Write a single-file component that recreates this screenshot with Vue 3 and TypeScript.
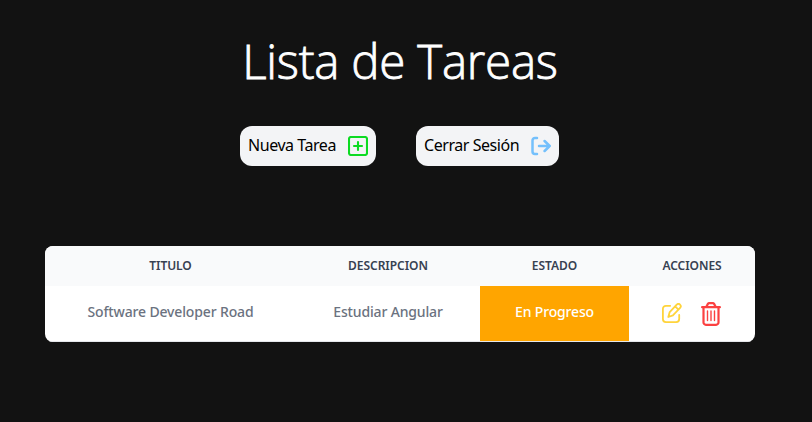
<script setup lang="ts">
interface Task {
  id: number
  title: string
  description: string
  status: string
}

const columns: string[] = ['Titulo', 'Descripcion', 'Estado', 'Acciones']
const tasks: Task[] = [
  { id: 1, title: 'Software Developer Road', description: 'Estudiar Angular', status: 'En Progreso' },
]
</script>

<template>
  <main class="page">
    <h1 class="title"><span>Lista de Tareas</span></h1>

    <div class="toolbar">
      <button class="btn btn-new" type="button">
        <span class="label">Nueva Tarea</span>
        <svg class="btn-icon add" viewBox="0 0 20 20" fill="none" stroke="currentColor" stroke-width="2.1" stroke-linecap="round">
          <rect x="1" y="1" width="18" height="18" rx="2" />
          <path d="M10 6v8M6 10h8" />
        </svg>
      </button>
      <button class="btn btn-out" type="button">
        <span class="label">Cerrar Sesión</span>
        <svg class="btn-icon logout" viewBox="0 0 20 20" fill="none" stroke="currentColor" stroke-width="2.5" stroke-linecap="round" stroke-linejoin="round">
          <path d="M6 2H4A2.500 2.500 0 0 0 1.500 4.500v11A2.500 2.500 0 0 0 4 18H6" />
          <path d="M8 10h10.700M13.600 5l5.100 5-5.100 5" />
        </svg>
      </button>
    </div>

    <div class="card">
      <table class="table">
        <colgroup>
          <col class="c1" />
          <col class="c2" />
          <col class="c3" />
          <col class="c4" />
        </colgroup>
        <thead>
          <tr>
            <th v-for="column in columns" :key="column">{{ column }}</th>
          </tr>
        </thead>
        <tbody>
          <tr v-for="task in tasks" :key="task.id">
            <td><span class="cell">{{ task.title }}</span></td>
            <td><span class="cell">{{ task.description }}</span></td>
            <td class="status"><span class="cell">{{ task.status }}</span></td>
            <td>
              <div class="actions">
                <svg class="edit" viewBox="0 0 20 20" fill="none" stroke="currentColor" stroke-width="1.8" stroke-linecap="round" stroke-linejoin="round">
                  <path d="M8.200 2.800H3.900A3 3 0 0 0 .9 5.800v10.300a3 3 0 0 0 3 3h10.300a3 3 0 0 0 3-3v-4.300" />
                  <path d="M14.700 1.700a2.250 2.250 0 0 1 3.400 3.200L10.900 12.300 6.300 14l1.400-4.900zM13.200 3.400l3.200 3.200" />
                </svg>
                <svg class="trash" viewBox="0 0 20 24" fill="none" stroke="currentColor" stroke-width="2.2" stroke-linecap="round" stroke-linejoin="round">
                  <path d="M1.100 5.200h17.800M5.200 5l1.700-3.100Q7.300 1.100 8.200 1.100h3.600q.9 0 1.300.8L14.800 5" />
                  <path d="M2.500 5.200v15.200A2.400 2.400 0 0 0 4.900 22.800h10.200a2.400 2.400 0 0 0 2.400-2.400V5.200" />
                  <path stroke-width="1.400" d="M6.500 9v9.500M10 9v9.500M13.500 9v9.500" />
                </svg>
              </div>
            </td>
          </tr>
        </tbody>
      </table>
    </div>
  </main>
</template>

<style>
body {
  background: #121212;
}
</style>

<style scoped>
.page {
  box-sizing: border-box;
  width: 800px;
  height: 422px;
  padding: 36px 45px 0;
  font-family: 'Noto Sans', 'Open Sans', sans-serif;
}

.title {
  margin: 0;
  height: 50px;
  color: #fff;
  font-family: 'Open Sans', 'Noto Sans', sans-serif;
  font-size: 47.500px;
  font-weight: 300;
  letter-spacing: -0.250px;
  line-height: 49px;
  text-align: center;
  white-space: nowrap;
  -webkit-text-stroke: 0.800px #fff;
}

.toolbar {
  display: flex;
  gap: 40px;
  margin: 40px 0 80px 195px;
}

.btn {
  box-sizing: border-box;
  display: flex;
  align-items: center;
  justify-content: space-between;
  height: 40px;
  padding: 0 8px;
  border: 0;
  border-radius: 12px;
  background: #f3f4f6;
  color: #000;
  font-family: inherit;
  font-size: 16px;
  line-height: 24px;
  white-space: nowrap;
}

.btn-new {
  width: 136px;
}

.btn-out {
  width: 143px;
}

.label {
  padding-bottom: 2px;
  letter-spacing: -0.450px;
}

.btn-icon {
  flex: none;
  width: 20px;
  height: 20px;
}

.add {
  color: #0cdb22;
}

.logout {
  color: #74c0fc;
}

.card {
  height: 96px;
  overflow: hidden;
  border-radius: 8px;
  background: #fff;
}

.table {
  width: 710px;
  border-collapse: separate;
  border-spacing: 0;
  table-layout: fixed;
  text-align: center;
}

.c1 {
  width: 251px;
}

.c2 {
  width: 184px;
}

.c3 {
  width: 149px;
}

.c4 {
  width: 126px;
}

th {
  height: 40px;
  padding: 0;
  background: #f9fafb;
  color: #374151;
  font-size: 12px;
  font-weight: 600;
  letter-spacing: -0.050px;
  line-height: 16px;
  text-transform: uppercase;
}

td {
  box-sizing: border-box;
  height: 56px;
  padding: 0 0 3px;
  border-bottom: 1px solid #e5e7eb;
  color: #6b7280;
  font-size: 14px;
  font-weight: 500;
  line-height: 20px;
  white-space: nowrap;
}

.cell {
  letter-spacing: -0.150px;
}

.status {
  background: orange;
  background-clip: padding-box;
  color: #fff;
}

.actions {
  display: flex;
  align-items: center;
  justify-content: center;
  gap: 19px;
  padding: 3px 2px 0 0;
}

.edit {
  width: 20px;
  height: 20px;
  margin-bottom: 1px;
  color: #ffd43b;
}

.trash {
  width: 20px;
  height: 24px;
  color: #fb4141;
}
</style>
